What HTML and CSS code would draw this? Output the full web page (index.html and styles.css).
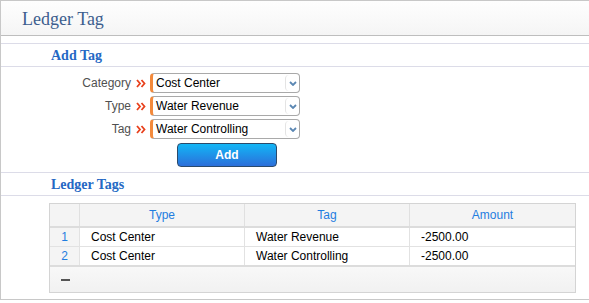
FILE: index.html
```html
<!DOCTYPE html>
<html lang="en">
<head>
  <meta charset="UTF-8" />
  <title>Ledger Tag</title>
  <link rel="stylesheet" href="styles.css">
</head>
<body>
  <div class="panel">
    <div class="panel-title">Ledger Tag</div>

    <div class="section-head">Add Tag</div>
    <div class="tag-form">
      <div class="form-row">
        <label class="form-label">Category</label>
        <span class="req"><svg viewBox="0 0 10 9"><polyline points="1,1 4,4.5 1,8"/><polyline points="5.5,1 8.5,4.5 5.5,8"/></svg></span>
        <div class="select"><span class="select-text">Cost Center</span><span class="select-arrow"><svg viewBox="0 0 8 5"><polyline points="1,1 4,4 7,1"/></svg></span></div>
      </div>
      <div class="form-row">
        <label class="form-label">Type</label>
        <span class="req"><svg viewBox="0 0 10 9"><polyline points="1,1 4,4.5 1,8"/><polyline points="5.5,1 8.5,4.5 5.5,8"/></svg></span>
        <div class="select"><span class="select-text">Water Revenue</span><span class="select-arrow"><svg viewBox="0 0 8 5"><polyline points="1,1 4,4 7,1"/></svg></span></div>
      </div>
      <div class="form-row">
        <label class="form-label">Tag</label>
        <span class="req"><svg viewBox="0 0 10 9"><polyline points="1,1 4,4.5 1,8"/><polyline points="5.5,1 8.5,4.5 5.5,8"/></svg></span>
        <div class="select"><span class="select-text">Water Controlling</span><span class="select-arrow"><svg viewBox="0 0 8 5"><polyline points="1,1 4,4 7,1"/></svg></span></div>
      </div>
      <button class="btn-add">Add</button>
    </div>

    <div class="section-head">Ledger Tags</div>
    <div class="grid-wrap">
      <table class="grid">
        <thead>
          <tr>
            <th class="col-num"></th>
            <th class="col-type">Type</th>
            <th class="col-tag">Tag</th>
            <th class="col-amt">Amount</th>
          </tr>
        </thead>
        <tbody>
          <tr>
            <td class="num">1</td>
            <td>Cost Center</td>
            <td>Water Revenue</td>
            <td>-2500.00</td>
          </tr>
          <tr class="last">
            <td class="num">2</td>
            <td>Cost Center</td>
            <td>Water Controlling</td>
            <td>-2500.00</td>
          </tr>
        </tbody>
      </table>
      <div class="grid-foot"><span class="collapse"></span></div>
    </div>
  </div>
</body>
</html>
```

FILE: styles.css
```css
html, body {
  margin: 0;
  padding: 0;
  background: #fff;
}

body {
  font-family: "Liberation Sans", Arial, sans-serif;
  font-size: 12px;
  color: #000;
}

.panel {
  border: 1px solid #c8c8c8;
  border-right: none;
  height: 300px;
  box-sizing: border-box;
  overflow: hidden;
}

.panel-title {
  height: 34px;
  line-height: 36px;
  padding-left: 21px;
  font-family: "Liberation Serif", "Times New Roman", serif;
  font-size: 18px;
  color: #3d5e8e;
  background: linear-gradient(#fefefe, #f5f5f5);
  border-bottom: 1px solid #bebebe;
  margin-bottom: 7px;
}

.section-head {
  height: 22px;
  line-height: 23px;
  padding-left: 50px;
  font-family: "Liberation Serif", "Times New Roman", serif;
  font-size: 14px;
  font-weight: bold;
  color: #2468c4;
  border-top: 1px solid #dcdce8;
  border-bottom: 1px solid #dcdce8;
}

.tag-form {
  padding: 6px 0 5px;
  display: flex;
  flex-direction: column;
  gap: 3px;
}

.form-row {
  display: flex;
  align-items: center;
  height: 20px;
}

.form-label {
  width: 130px;
  text-align: right;
  color: #505050;
}

.req {
  width: 19px;
  display: flex;
  justify-content: center;
}

.req svg {
  width: 10px;
  height: 9px;
  fill: none;
  stroke: #e8401c;
  stroke-width: 1.8;
}

.select {
  width: 150px;
  height: 20px;
  box-sizing: border-box;
  display: flex;
  align-items: center;
  border: 1px solid #a9a9a9;
  border-left: 3px solid #f38a3c;
  border-radius: 4px;
  background: #fff;
}

.select-text {
  flex: 1;
  padding-left: 3px;
}

.select-arrow {
  width: 13px;
  height: 16px;
  display: flex;
  align-items: center;
  justify-content: center;
  border-left: 1px solid #e4e4e4;
  border-radius: 4px 0 0 4px;
}

.select-arrow svg {
  width: 8px;
  height: 5px;
  fill: none;
  stroke: #5b87b3;
  stroke-width: 1.8;
}

.btn-add {
  margin: 1px 0 0 176px;
  width: 100px;
  height: 24px;
  border: 1px solid #2b4a6b;
  border-radius: 4px;
  background: linear-gradient(#12b6f6, #2c6fda);
  color: #fff;
  font-family: "Liberation Sans", Arial, sans-serif;
  font-size: 12px;
  font-weight: bold;
  padding: 0;
}

.grid-wrap {
  margin: 7px 0 0 48px;
  width: 527px;
  border: 1px solid #d4d4d4;
  box-sizing: border-box;
}

.grid {
  width: 100%;
  border-collapse: collapse;
  table-layout: fixed;
}

.grid th {
  height: 22px;
  padding: 0;
  background: #f4f4f4;
  color: #1f7de0;
  font-weight: normal;
  text-align: center;
  border-bottom: 2px solid #dcdcdc;
  border-left: 1px solid #e0e0e0;
}

.grid th:first-child,
.grid td:first-child {
  border-left: none;
}

.col-num { width: 29px; }
.col-type { width: 164px; }
.col-tag { width: 164px; }

.grid td {
  height: 18px;
  padding: 0 0 0 11px;
  line-height: 18px;
  border-bottom: 1px solid #e2e2e2;
  border-left: 1px solid #e2e2e2;
  white-space: nowrap;
  overflow: hidden;
}

.grid tr.last td {
  border-bottom: 2px solid #dcdcdc;
}

.grid td.num {
  padding: 0;
  text-align: center;
  background: #f4f4f4;
  color: #1f7de0;
}

.grid-foot {
  height: 25px;
  display: flex;
  align-items: center;
  padding-left: 11px;
  background: linear-gradient(#f8f8f8, #f1f1f1);
}

.collapse {
  width: 9px;
  height: 2px;
  background: #555;
}
```
